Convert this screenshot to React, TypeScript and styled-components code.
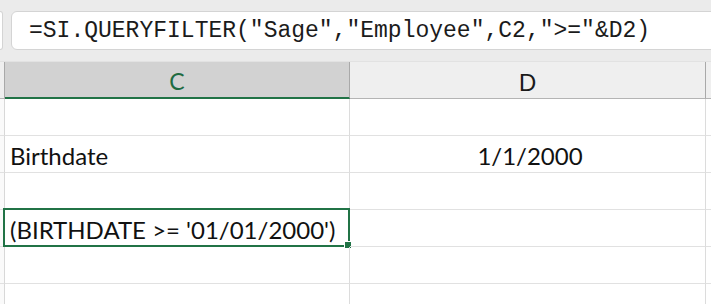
import React from "react";
import styled, { createGlobalStyle } from "styled-components";

const GlobalStyle = createGlobalStyle`
  html, body {
    margin: 0;
    padding: 0;
    background: #ffffff;
    overflow: hidden;
  }
  body {
    font-family: Lato, "Open Sans", sans-serif;
  }
`;

const Page = styled.div`
  width: 711px;
  height: 304px;
  overflow: hidden;
  background: #ffffff;
`;

const Toolbar = styled.div`
  display: flex;
  align-items: flex-start;
  gap: 8px;
  height: 62px;
  padding-top: 11px;
  box-sizing: border-box;
  background: #ebebeb;
  border-bottom: 1px solid #e2e2e2;
`;

const NameBoxStub = styled.div`
  width: 3px;
  height: 39px;
  box-sizing: border-box;
  background: #ffffff;
  border: 1px solid #d4d4d4;
  border-left: none;
  border-radius: 0 5px 5px 0;
`;

const FormulaBox = styled.div`
  flex: 1;
  height: 39px;
  margin-right: -20px;
  box-sizing: border-box;
  display: flex;
  align-items: center;
  padding-left: 17px;
  background: #ffffff;
  border: 1px solid #d4d4d4;
  border-radius: 6px;
  font-family: "Liberation Mono", "DejaVu Sans Mono", monospace;
  font-size: 23px;
  color: #1b1b1b;
  white-space: nowrap;
`;

const Grid = styled.div`
  display: grid;
  grid-template-columns: 5px 345px 356px 1fr;
  grid-auto-rows: 37px;
`;

const HeaderCell = styled.div<{ $active?: boolean }>`
  display: flex;
  align-items: center;
  justify-content: center;
  padding-top: 3px;
  box-sizing: border-box;
  background: ${(p) => (p.$active ? "#d2d2d2" : "#efefef")};
  border-right: 1px solid #a9a9a9;
  border-bottom: ${(p) =>
    p.$active ? "2px solid #217346" : "1px solid #b4b4b4"};
  font-size: 23px;
  color: ${(p) => (p.$active ? "#1e6b41" : "#1a1a1a")};
`;

const Cell = styled.div<{ $align?: "left" | "center" }>`
  position: relative;
  display: flex;
  align-items: center;
  justify-content: ${(p) => (p.$align === "center" ? "center" : "flex-start")};
  padding: 3px 0 0 5px;
  box-sizing: border-box;
  border-right: 1px solid #dcdcdc;
  border-bottom: 1px solid #e1e1e1;
  font-size: 24px;
  color: #111111;
  white-space: nowrap;
`;

const RowHead = styled.div`
  background: #fafafa;
  border-right: 1px solid #d8d8d8;
  border-bottom: 1px solid #e1e1e1;
`;

const Selection = styled.div`
  position: absolute;
  left: -2px;
  top: -2px;
  right: -1px;
  bottom: -1px;
  border: 2px solid #217346;
  pointer-events: none;
`;

const FillHandle = styled.div`
  position: absolute;
  right: -4px;
  bottom: -4px;
  width: 6px;
  height: 6px;
  background: #217346;
  border: 1px solid #ffffff;
`;

type Row = { c?: string; d?: string; selected?: boolean };

const rows: Row[] = [
  {},
  { c: "Birthdate", d: "1/1/2000" },
  {},
  { c: "(BIRTHDATE >= '01/01/2000')", selected: true },
  {},
  {},
];

export default function App() {
  return (
    <Page>
      <GlobalStyle />
      <Toolbar>
        <NameBoxStub />
        <FormulaBox>=SI.QUERYFILTER("Sage","Employee",C2,"&gt;="&amp;D2)</FormulaBox>
      </Toolbar>
      <Grid>
        <HeaderCell />
        <HeaderCell $active>C</HeaderCell>
        <HeaderCell>D</HeaderCell>
        <HeaderCell />
        {rows.map((row, i) => (
          <React.Fragment key={i}>
            <RowHead />
            <Cell>
              {row.c}
              {row.selected && (
                <Selection>
                  <FillHandle />
                </Selection>
              )}
            </Cell>
            <Cell $align="center">{row.d}</Cell>
            <Cell />
          </React.Fragment>
        ))}
      </Grid>
    </Page>
  );
}
